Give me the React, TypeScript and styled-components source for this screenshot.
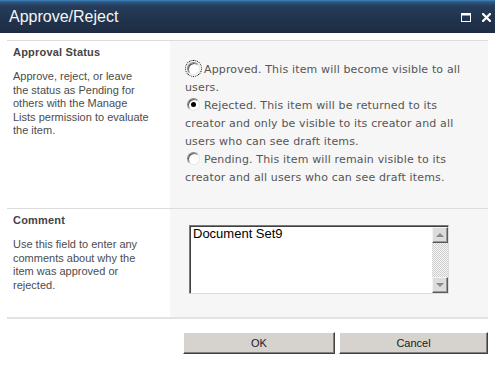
import React from "react";
import styled, {createGlobalStyle} from "styled-components";

const GlobalStyle = createGlobalStyle`
    html, body {
        margin: 0;
        padding: 0;
        background: #ffffff;
    }
    body {
        width: 495px;
        height: 373px;
        overflow: hidden;
        font-family: "Liberation Sans", Arial, sans-serif;
    }
`;

const Dialog = styled.div`
    width: 495px;
    height: 373px;
    display: flex;
    flex-direction: column;
    background: #ffffff;
`;

const TitleBar = styled.header`
    height: 33px;
    display: flex;
    align-items: center;
    justify-content: space-between;
    padding: 0 4px 0 9px;
    box-sizing: border-box;
    background: linear-gradient(#3f86c4 0, #2d5680 2px, #253d5b 6px, #21344e 18px, #1d2c43 100%);
`;

const Title = styled.h1`
    margin: 0;
    font-family: "Liberation Sans", Arial, sans-serif;
    font-weight: normal;
    font-size: 16px;
    color: #f4f6f8;
    line-height: 1;
    padding-top: 1px;
`;

const WindowButtons = styled.div`
    display: flex;
    align-items: center;
    gap: 11px;
    padding-top: 2px;
`;

const Form = styled.main`
    padding: 7px 7px 0 7px;
    display: flex;
    flex-direction: column;
`;

const Section = styled.section<{ $height: number }>`
    display: grid;
    grid-template-columns: 163px 318px;
    height: ${props => props.$height}px;
    border-top: 1px solid #dcdcdc;
`;

const LabelCell = styled.div`
    padding: 5px 8px 0 6px;
    color: #4c4c4c;
`;

const LabelTitle = styled.h3`
    margin: 0 0 11px 0;
    font-size: 11px;
    line-height: 13px;
    font-weight: bold;
    color: #444444;
    letter-spacing: 0.2px;
`;

const LabelText = styled.p`
    margin: 0;
    font-size: 11px;
    line-height: 13.5px;
`;

const ControlCell = styled.div<{ $pad: string }>`
    background: #f6f6f6;
    padding: ${props => props.$pad};
`;

const Choices = styled.div`
    display: flex;
    flex-direction: column;
    font-family: "DejaVu Sans", Verdana, sans-serif;
    font-size: 11px;
    line-height: 18px;
    color: #555555;
    white-space: nowrap;
    letter-spacing: 0.15px;
`;

const Choice = styled.label`
    display: block;
`;

const Radio = styled.span<{ $checked?: boolean; $focused?: boolean }>`
    display: inline-block;
    position: relative;
    width: 11px;
    height: 11px;
    margin: 0 4px 0 2px;
    vertical-align: -2px;
    border-radius: 50%;
    border: 1px solid;
    border-color: #8a8a8a #e6e6e6 #e6e6e6 #8a8a8a;
    box-shadow: inset 1px 1px 0 #5a5a5a;
    background: #ffffff;
    outline: ${props => props.$focused ? '1px dotted #000' : 'none'};
    outline-offset: 1px;

    &::after {
        content: '';
        display: ${props => props.$checked ? 'block' : 'none'};
        position: absolute;
        left: 3px;
        top: 3px;
        width: 5px;
        height: 5px;
        border-radius: 50%;
        background: #000000;
    }
`;

const TextBox = styled.div`
    width: 260px;
    height: 69px;
    box-sizing: border-box;
    display: flex;
    border: 1px solid;
    border-color: #7a7a7a #dcdcdc #dcdcdc #7a7a7a;
    box-shadow: inset 1px 1px 0 #404040;
    background: #ffffff;
`;

const TextArea = styled.textarea`
    flex: 1;
    border: none;
    outline: none;
    resize: none;
    overflow: hidden;
    margin: 1px 0 0 1px;
    padding: 0 2px;
    font-family: "Liberation Sans", Arial, sans-serif;
    font-size: 13px;
    line-height: 14px;
    color: #000000;
    background: transparent;
`;

const ScrollBar = styled.div`
    width: 16px;
    display: flex;
    flex-direction: column;
    justify-content: space-between;
    margin-top: 1px;
    background: repeating-conic-gradient(#cfcfcf 0 25%, #f4f4f4 0 50%) 0 0 / 2px 2px;
`;

const ScrollButton = styled.div<{ $down?: boolean }>`
    height: 16px;
    box-sizing: border-box;
    display: flex;
    align-items: center;
    justify-content: center;
    background: #dcdcdc;
    border: 1px solid;
    border-color: #f4f4f4 #5a5a5a #5a5a5a #f4f4f4;
    box-shadow: inset -1px -1px 0 #9a9a9a;

    &::before {
        content: '';
        width: 0;
        height: 0;
        border-left: 4px solid transparent;
        border-right: 4px solid transparent;
        ${props => props.$down
            ? 'border-top: 4px solid #8a8a8a;'
            : 'border-bottom: 4px solid #8a8a8a;'}
    }
`;

const Footer = styled.footer`
    border-top: 2px solid #e2e2e2;
    display: flex;
    justify-content: flex-end;
    gap: 4px;
    padding: 13px 0 0 0;
`;

const Button = styled.button<{ $width: number }>`
    width: ${props => props.$width}px;
    height: 22px;
    box-sizing: border-box;
    background: #d6d3ce;
    border: 1px solid;
    border-color: #ffffff #404040 #404040 #ffffff;
    box-shadow: inset -1px -1px 0 #808080;
    font-family: "Liberation Sans", Arial, sans-serif;
    font-size: 11px;
    color: #1a1a1a;
    padding: 0;
    cursor: pointer;
`;

function MaximizeIcon(): React.ReactElement {
    return <svg width="10" height="9" viewBox="0 0 10 9">
        <rect x="0.5" y="0.5" width="9" height="8" fill="none" stroke="#ffffff" strokeWidth="1"/>
        <rect x="0" y="0" width="10" height="2.5" fill="#ffffff"/>
    </svg>;
}

function CloseIcon(): React.ReactElement {
    return <svg width="9" height="9" viewBox="0 0 9 9">
        <path d="M1 1 L8 8 M8 1 L1 8" stroke="#ffffff" strokeWidth="2.2" strokeLinecap="square"/>
    </svg>;
}

export default function App(): React.ReactElement {
    return <>
        <GlobalStyle/>
        <Dialog>
            <TitleBar>
                <Title>Approve/Reject</Title>
                <WindowButtons>
                    <MaximizeIcon/>
                    <CloseIcon/>
                </WindowButtons>
            </TitleBar>
            <Form>
                <Section $height={167}>
                    <LabelCell>
                        <LabelTitle>Approval Status</LabelTitle>
                        <LabelText>
                            Approve, reject, or leave<br/>
                            the status as Pending for<br/>
                            others with the Manage<br/>
                            Lists permission to evaluate<br/>
                            the item.
                        </LabelText>
                    </LabelCell>
                    <ControlCell $pad="20px 10px 0 15px">
                        <Choices>
                            <Choice>
                                <Radio $focused/>Approved. This item will become visible to all<br/>
                                users.
                            </Choice>
                            <Choice>
                                <Radio $checked/>Rejected. This item will be returned to its<br/>
                                creator and only be visible to its creator and all<br/>
                                users who can see draft items.
                            </Choice>
                            <Choice>
                                <Radio/>Pending. This item will remain visible to its<br/>
                                creator and all users who can see draft items.
                            </Choice>
                        </Choices>
                    </ControlCell>
                </Section>
                <Section $height={108}>
                    <LabelCell>
                        <LabelTitle>Comment</LabelTitle>
                        <LabelText>
                            Use this field to enter any<br/>
                            comments about why the<br/>
                            item was approved or<br/>
                            rejected.
                        </LabelText>
                    </LabelCell>
                    <ControlCell $pad="16px 0 0 19px">
                        <TextBox>
                            <TextArea defaultValue="Document Set9"/>
                            <ScrollBar>
                                <ScrollButton/>
                                <ScrollButton $down/>
                            </ScrollBar>
                        </TextBox>
                    </ControlCell>
                </Section>
                <Footer>
                    <Button $width={152}>OK</Button>
                    <Button $width={149}>Cancel</Button>
                </Footer>
            </Form>
        </Dialog>
    </>;
}
